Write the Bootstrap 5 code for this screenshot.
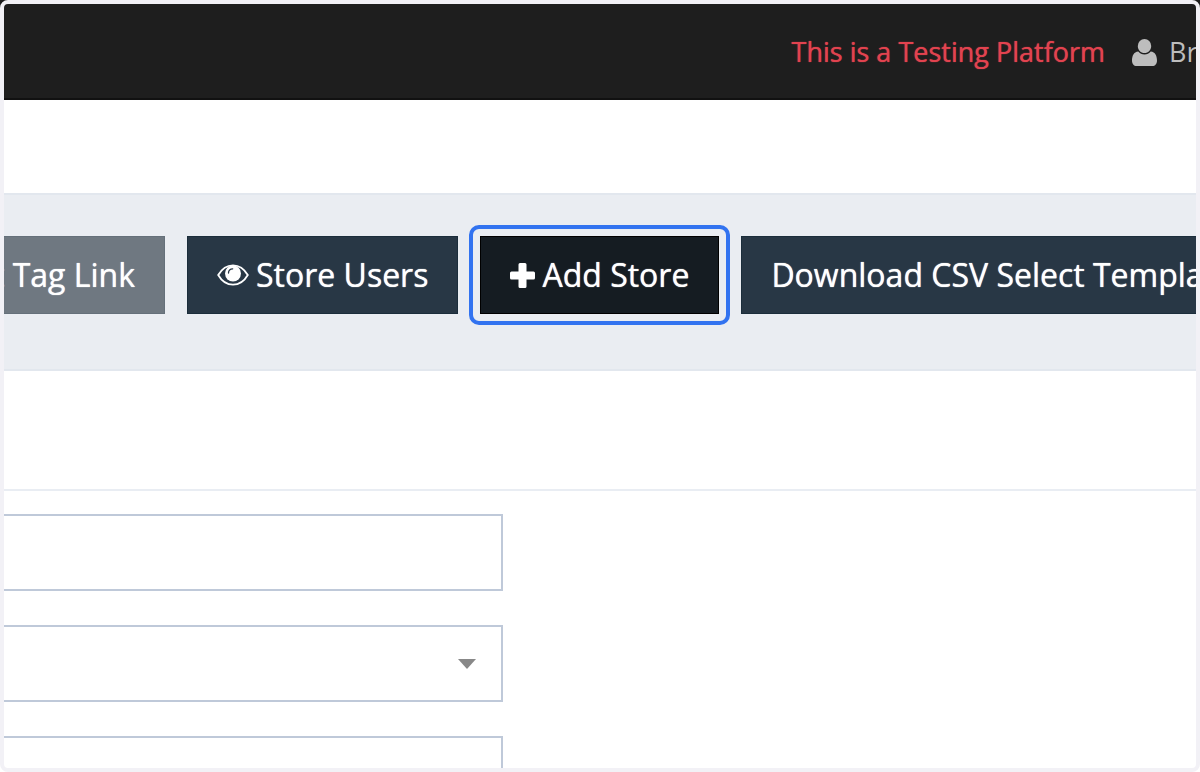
<!DOCTYPE html>
<html lang="en">
<head>
<meta charset="utf-8">
<meta name="viewport" content="width=device-width, initial-scale=1">
<title>Stores</title>
<link href="https://cdn.jsdelivr.net/npm/bootstrap@5.3.0/dist/css/bootstrap.min.css" rel="stylesheet">
<style>
body { font-family: "Open Sans", sans-serif; background: #fff; }
.topbar { height: 100px; background: #1e1e1e; border-bottom: 2px solid #111; padding-top: 6px; }
.notice { color: #e2434f; font-size: 27px; line-height: 40px; margin-right: 27px; text-shadow: 0 0 1px #e2434f; }
.account { width: 68px; color: #bdbdbd; font-size: 27px; line-height: 40px; gap: 12px; }
.toolbar { margin-top: 93px; height: 178px; padding-top: 41px; gap: 22px; background: #eaedf2; border-top: 2px solid #e2e7ee; border-bottom: 2px solid #e2e7ee; }
.tool { height: 78px; padding: 0 29px; gap: 7px; font-size: 32px; line-height: 44px; border: 1px solid #1b2d3b; border-radius: 0; background: #283745; color: #fff; text-shadow: 0 0 1px #fff; }
.tool:hover { background: #1b2d3b; color: #fff; }
.tool.tag-link { width: 165px; background: #6f7881; border-color: #65707a; }
.tool.add-store { background: #151c22; border-color: #000; }
.ring { position: relative; }
.ring::after { content: ""; position: absolute; inset: -11px; border: 4px solid #3273f0; border-radius: 10px; pointer-events: none; }
.panel-head { height: 120px; border-bottom: 2px solid #e9edf3; }
.fields { width: 41.9%; padding-top: 23px; gap: 34px; }
.fields .form-control, .fields .form-select { height: 77px; border: 2px solid #bfc9d9; border-left: 0; border-radius: 0; font-size: 27px; background-color: #fff; }
.fields .form-select { background-image: url("data:image/svg+xml,%3Csvg xmlns='http://www.w3.org/2000/svg' viewBox='0 0 18 10'%3E%3Cpath fill='%23888' d='M0 0h18L9 10z'/%3E%3C/svg%3E"); background-size: 18px 10px; background-position: right 25px center; }
.frame { position: fixed; inset: 0; border: 4px solid #f2f1f6; border-radius: 8px; pointer-events: none; z-index: 10; }
</style>
</head>
<body>
<div class="vh-100 overflow-hidden">
  <header class="topbar d-flex align-items-center justify-content-end text-nowrap">
    <span class="notice">This is a Testing Platform</span>
    <a href="#" class="account d-flex align-items-center text-decoration-none">
      <svg class="flex-shrink-0" width="25" height="27" viewBox="0 0 25 27" fill="currentColor" aria-hidden="true"><path d="M12.500 0a6.700 7 0 0 1 6.700 7c0 3.900-3 7.100-6.700 7.100S5.800 10.900 5.800 7a6.700 7 0 0 1 6.700-7z"/><path d="M6.300 12.500c1.500 1.900 3.700 3 6.200 3s4.700-1.100 6.200-3c4.600.2 6.300 4.700 6.300 9.200 0 3-1.900 5.300-4.600 5.300H4.600C1.900 27 0 24.700 0 21.700c0-4.500 1.700-9 6.300-9.200z"/></svg>
      <span>Br</span>
    </a>
  </header>

  <div class="toolbar d-flex align-items-start text-nowrap">
    <button type="button" class="btn tool tag-link d-flex align-items-center justify-content-end flex-shrink-0"><span>t Tag Link</span></button>
    <button type="button" class="btn tool d-flex align-items-center flex-shrink-0">
      <svg width="32" height="22" viewBox="0 0 32 22" aria-hidden="true"><path d="M1.200 11C4.700 5 10 1.300 16 1.300S27.300 5 30.800 11C27.300 17 22 20.700 16 20.700S4.700 17 1.200 11z" fill="none" stroke="currentColor" stroke-width="1.800"/><circle cx="16" cy="9.500" r="8" fill="currentColor"/><path d="M11.500 9c0-2.500 1.700-4.200 4.200-4.200" fill="none" stroke="#283745" stroke-width="1.300" stroke-linecap="round"/></svg>
      <span>Store Users</span>
    </button>
    <div class="ring flex-shrink-0">
      <button type="button" class="btn tool add-store d-flex align-items-center">
        <svg width="25" height="25" viewBox="0 0 25 25" fill="currentColor" aria-hidden="true"><path d="M10 0h5q1.500 0 1.500 1.500v7h7q1.500 0 1.500 1.500v5q0 1.500-1.500 1.500h-7v7q0 1.500-1.500 1.500h-5q-1.500 0-1.500-1.500v-7h-7Q0 16.500 0 15v-5q0-1.500 1.500-1.500h7v-7Q8.500 0 10 0z"/></svg>
        <span>Add Store</span>
      </button>
    </div>
    <button type="button" class="btn tool flex-shrink-0">Download CSV Select Template</button>
  </div>

  <main>
    <div class="panel-head"></div>
    <form class="fields d-flex flex-column">
      <input type="text" class="form-control" aria-label="Store name">
      <select class="form-select" aria-label="Store group"><option></option></select>
      <input type="text" class="form-control" aria-label="Store details">
    </form>
  </main>
</div>
<div class="frame"></div>
<script src="https://cdn.jsdelivr.net/npm/bootstrap@5.3.0/dist/js/bootstrap.bundle.min.js"></script>
</body>
</html>
